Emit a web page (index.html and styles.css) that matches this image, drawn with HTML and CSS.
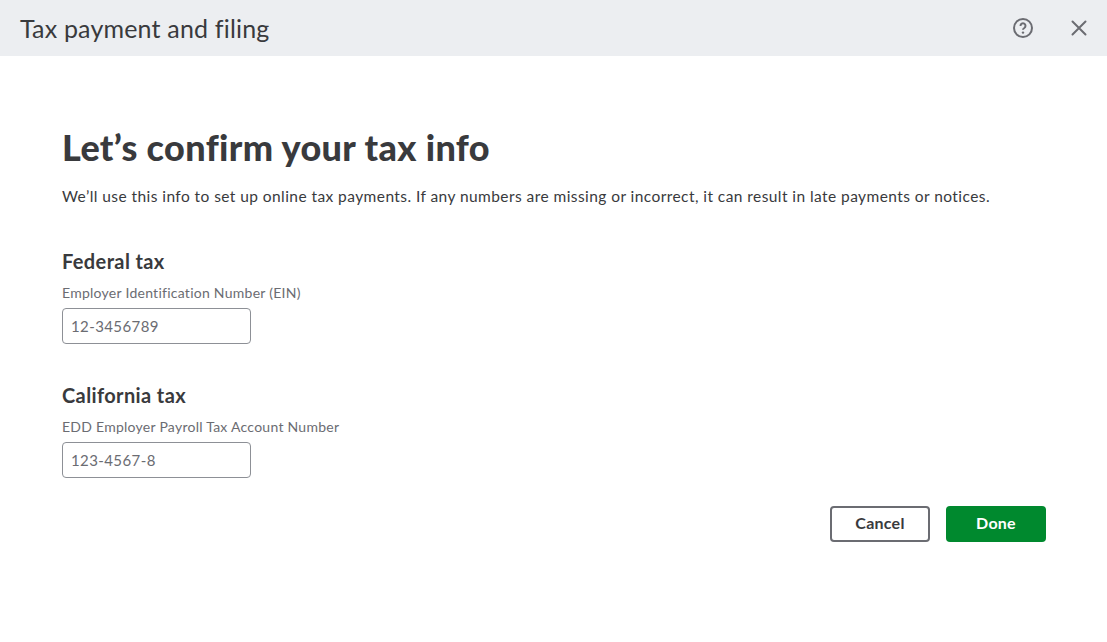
FILE: index.html
```html
<!DOCTYPE html>
<html lang="en">
<head>
<meta charset="utf-8">
<title>Tax payment and filing</title>
<link rel="stylesheet" href="styles.css">
</head>
<body>
<header class="topbar">
  <div class="topbar-title">Tax payment and filing</div>
  <div class="topbar-actions">
    <svg class="icon" width="24" height="24" viewBox="0 0 24 24" fill="none" stroke="#6b6c72" stroke-width="2"><circle cx="12" cy="12" r="9"/><path d="M9.500 9.900a2.500 2.500 0 1 1 3.800 2.100c-.9.500-1.300.9-1.300 1.700" stroke-width="2"/><circle cx="12" cy="16.600" r="1.200" fill="#6b6c72" stroke="none"/></svg>
    <svg class="icon" width="24" height="24" viewBox="0 0 24 24" fill="none" stroke="#6b6c72" stroke-width="2" stroke-linecap="round"><path d="M5.500 5.500l13 13M18.500 5.500l-13 13"/></svg>
  </div>
</header>
<main class="content">
  <h1 class="title">Let’s confirm your tax info</h1>
  <p class="intro">We’ll use this info to set up online tax payments. If any numbers are missing or incorrect, it can result in late payments or notices.</p>
  <section class="group">
    <h2 class="group-title">Federal tax</h2>
    <label class="field-label">Employer Identification Number (EIN)</label>
    <div class="input">12-3456789</div>
  </section>
  <section class="group">
    <h2 class="group-title">California tax</h2>
    <label class="field-label">EDD Employer Payroll Tax Account Number</label>
    <div class="input">123-4567-8</div>
  </section>
  <div class="actions">
    <button class="btn btn-secondary">Cancel</button>
    <button class="btn btn-primary">Done</button>
  </div>
</main>
</body>
</html>
```
FILE: styles.css
```css
* { box-sizing: border-box; }
html, body { margin: 0; padding: 0; }
body { width: 1107px; height: 642px; background: #fff; font-family: "Lato", "Open Sans", sans-serif; color: #393a3d; overflow: hidden; }
.topbar { height: 56px; background: #eceef1; display: flex; align-items: center; justify-content: space-between; padding: 0 16px 0 20px; }
.topbar-title { font-size: 25px; letter-spacing: 0.18px; color: #393a3d; }
.topbar-actions { display: flex; gap: 32px; }
.icon { display: block; }
.content { padding: 70px 61px 0 62px; }
.title { margin: 0; font-size: 36px; letter-spacing: 0.37px; line-height: 42px; font-weight: 900; }
.intro { margin: 18px 0 0; font-size: 15.5px; letter-spacing: 0.43px; line-height: 20px; }
.group { margin-top: 43px; }
.group + .group { margin-top: 39px; }
.group-title { margin: 0; font-size: 20px; letter-spacing: 0.38px; line-height: 24px; font-weight: 700; }
.field-label { display: block; margin-top: 12px; font-size: 14px; letter-spacing: 0.26px; line-height: 16px; color: #6b6c72; }
.input { margin-top: 7px; width: 189px; height: 36px; border: 1px solid #8d9096; border-radius: 4px; padding: 0 8px; font-size: 15px; letter-spacing: 0.4px; line-height: 34px; color: #6b6c72; }
.actions { display: flex; justify-content: flex-end; gap: 16px; margin-top: 28px; }
.btn { width: 100px; height: 36px; border-radius: 4px; font-family: inherit; font-size: 16px; letter-spacing: 0.25px; font-weight: 700; padding: 0 0 3px; }
.btn-secondary { background: #fff; border: 2px solid #6b6c72; color: #393a3d; }
.btn-primary { background: #00892e; border: 0; color: #fff; }
```
